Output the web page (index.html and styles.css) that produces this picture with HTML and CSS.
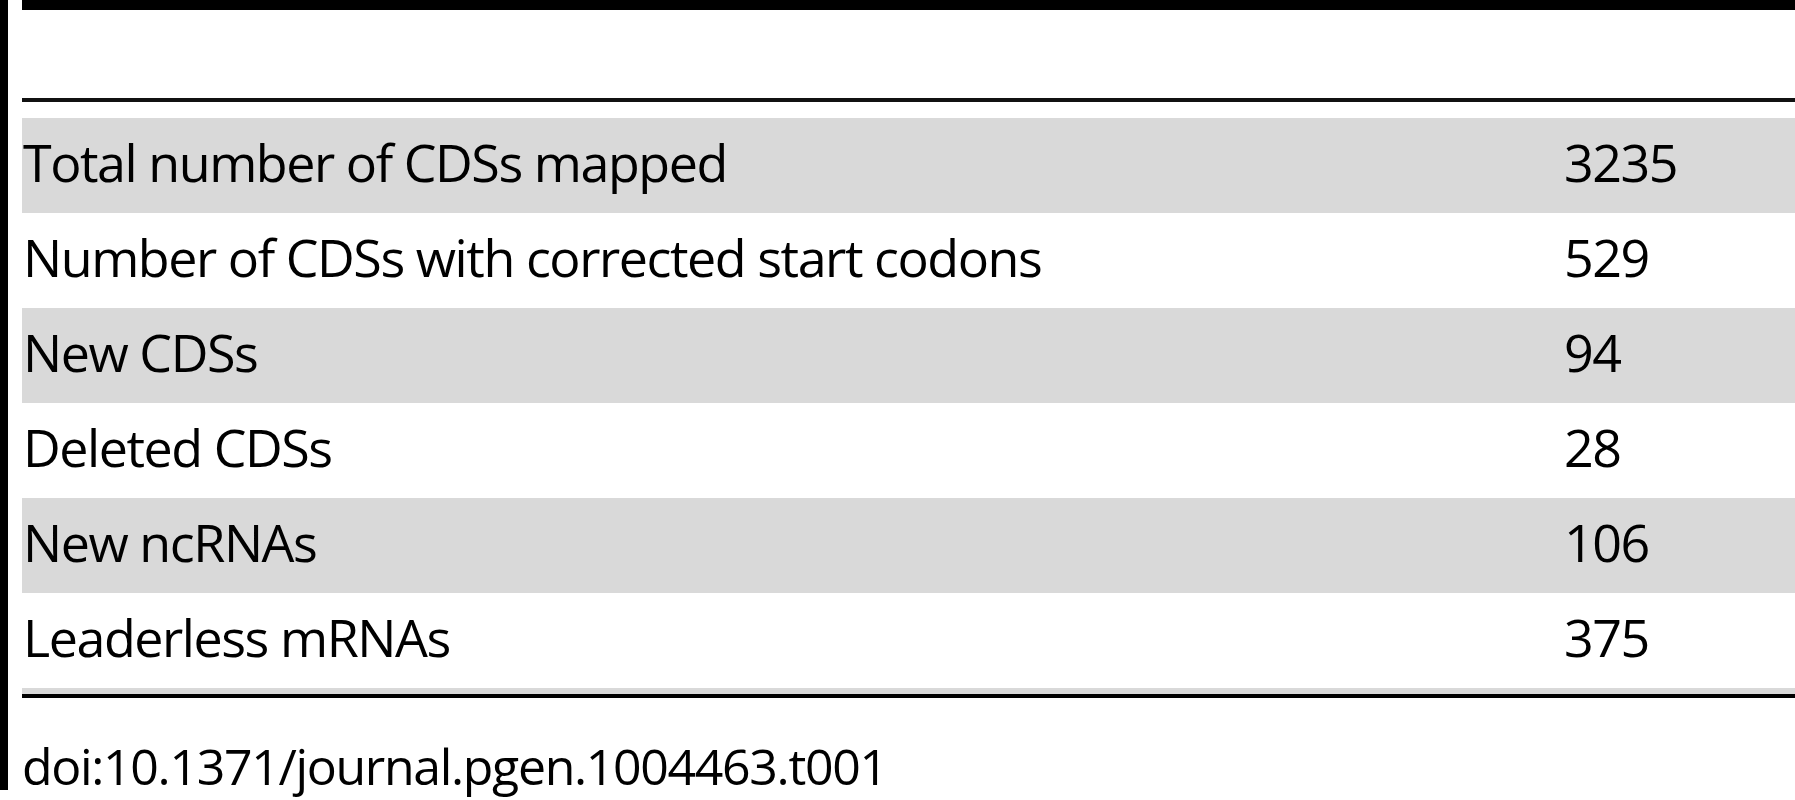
FILE: index.html
```html
<!DOCTYPE html>
<html>
<head>
<meta charset="utf-8">
<link rel="stylesheet" href="styles.css">
</head>
<body>
<div class="page">
  <div class="side-rule"></div>
  <div class="content">
    <div class="top-rule"></div>
    <div class="head-row"></div>
    <div class="head-rule"></div>
    <div class="gap"></div>
    <div class="table">
      <div class="row shaded"><div class="label">Total number of CDSs mapped</div><div class="value">3235</div></div>
      <div class="row"><div class="label">Number of CDSs with corrected start codons</div><div class="value">529</div></div>
      <div class="row shaded"><div class="label">New CDSs</div><div class="value">94</div></div>
      <div class="row"><div class="label">Deleted CDSs</div><div class="value">28</div></div>
      <div class="row shaded"><div class="label">New ncRNAs</div><div class="value">106</div></div>
      <div class="row"><div class="label">Leaderless mRNAs</div><div class="value">375</div></div>
    </div>
    <div class="foot-strip"></div>
    <div class="foot-rule"></div>
    <div class="caption">doi:10.1371/journal.pgen.1004463.t001</div>
  </div>
</div>
</body>
</html>
```

FILE: styles.css
```css
html, body {
  margin: 0;
  padding: 0;
  background: #fff;
  overflow: hidden;
}
body {
  font-family: "Open Sans", "DejaVu Sans", sans-serif;
  color: #000;
}
.page {
  display: flex;
  width: 1795px;
  height: 800px;
}
.side-rule {
  flex: none;
  width: 8px;
  height: 790px;
  background: #000;
}
.content {
  flex: 1;
  margin-left: 14px;
  min-width: 0;
  display: flex;
  flex-direction: column;
}
.top-rule {
  height: 10px;
  background: #000;
}
.head-row {
  height: 89px;
}
.head-rule {
  height: 4px;
  background: #111;
}
.gap {
  height: 16px;
}
.table {
  display: flex;
  flex-direction: column;
}
.row {
  display: grid;
  grid-template-columns: 1542px 1fr;
  height: 95px;
  box-sizing: border-box;
  padding-bottom: 8px;
  font-size: 52px;
  letter-spacing: -1.45px;
  line-height: 87px;
  white-space: nowrap;
}
.row.shaded {
  background: #d9d9d9;
}
.label {
  padding-left: 1px;
}
.foot-strip {
  height: 6px;
  background: #d9d9d9;
}
.foot-rule {
  height: 4px;
  background: #000;
}
.caption {
  margin-top: 34px;
  font-size: 50px;
  letter-spacing: -1.33px;
  line-height: normal;
  white-space: nowrap;
}
```
